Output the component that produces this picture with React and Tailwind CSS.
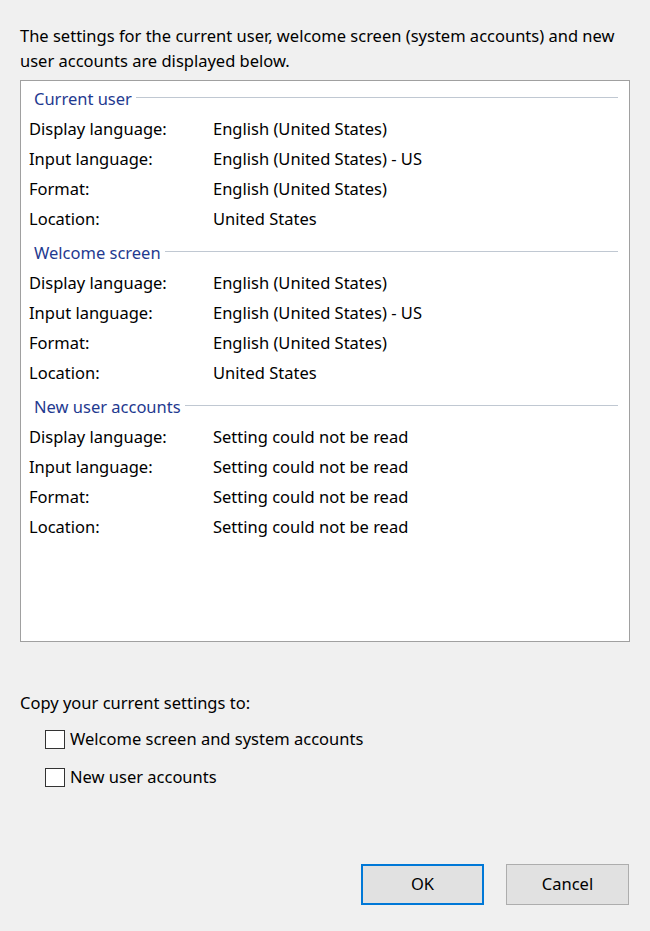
import React from 'react';

const sections = [
  {
    title: 'Current user',
    rows: [
      ['Display language:', 'English (United States)'],
      ['Input language:', 'English (United States) - US'],
      ['Format:', 'English (United States)'],
      ['Location:', 'United States'],
    ],
  },
  {
    title: 'Welcome screen',
    rows: [
      ['Display language:', 'English (United States)'],
      ['Input language:', 'English (United States) - US'],
      ['Format:', 'English (United States)'],
      ['Location:', 'United States'],
    ],
  },
  {
    title: 'New user accounts',
    rows: [
      ['Display language:', 'Setting could not be read'],
      ['Input language:', 'Setting could not be read'],
      ['Format:', 'Setting could not be read'],
      ['Location:', 'Setting could not be read'],
    ],
  },
];

function Section({ title, rows }) {
  return (
    <div className="pb-1">
      <div className="flex items-center h-[30px] pl-[13px] pr-[11px]">
        <span className="text-[#1f3a90] leading-none">{title}</span>
        <div className="flex-1 h-px bg-[#c0c8d2] ml-1 -mt-[3px]" />
      </div>
      {rows.map(([label, value], i) => (
        <div key={i} className="flex items-center h-[30px] pl-[8px]">
          <span className="w-[184px] shrink-0">{label}</span>
          <span>{value}</span>
        </div>
      ))}
    </div>
  );
}

function Checkbox({ label }) {
  return (
    <label className="flex items-center h-[38px] pl-[45px]">
      <span className="w-[20px] h-[19px] border border-[#333333] bg-white shrink-0" />
      <span className="ml-[5px]">{label}</span>
    </label>
  );
}

export default function App() {
  return (
    <div
      className="w-[650px] h-[931px] bg-[#f0f0f0] text-[#000000] text-[16.5px] flex flex-col"
      style={{ fontFamily: '"Segoe UI", "Noto Sans", sans-serif' }}
    >
      <p className="px-[20px] pt-[23px] leading-[25px]">
        The settings for the current user, welcome screen (system accounts) and new user accounts are displayed below.
      </p>

      <div className="mx-[20px] mt-[7px] h-[562px] border border-[#a0a0a0] bg-white pt-[3px]">
        {sections.map((s) => (
          <Section key={s.title} {...s} />
        ))}
      </div>

      <p className="px-[20px] mt-[48px] leading-[25px]">Copy your current settings to:</p>
      <div className="mt-[5px]">
        <Checkbox label="Welcome screen and system accounts" />
        <Checkbox label="New user accounts" />
      </div>

      <div className="flex justify-end gap-[22px] pr-[21px] mt-auto mb-[26px]">
        <button className="w-[123px] h-[41px] border-2 border-[#0078d7] bg-[#e1e1e1] text-[16.5px]">OK</button>
        <button className="w-[123px] h-[41px] border border-[#adadad] bg-[#e1e1e1] text-[16.5px]">Cancel</button>
      </div>
    </div>
  );
}
